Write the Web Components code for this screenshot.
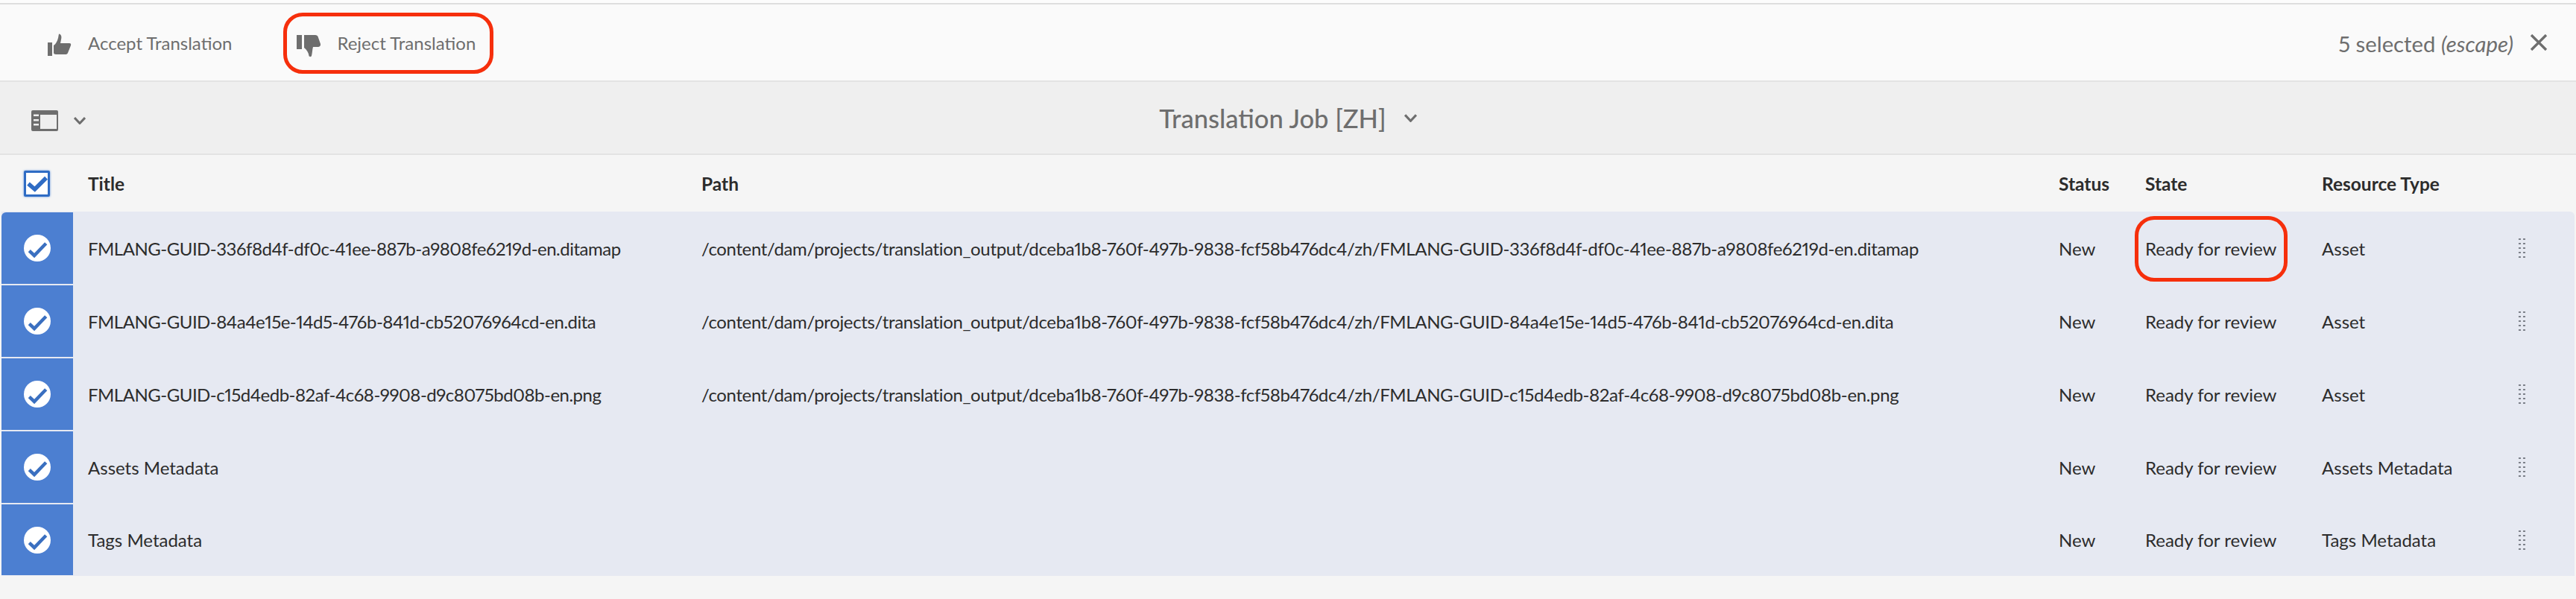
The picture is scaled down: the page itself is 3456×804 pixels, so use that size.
<!DOCTYPE html>
<html>
<head>
<meta charset="utf-8">
<title>Translation Job</title>
<style>
    html, body { margin: 0; padding: 0; background: #f5f5f5; }
    body { font-family: "Lato", "Liberation Sans", sans-serif; font-variant-numeric: proportional-nums; width: 3456px; height: 804px; overflow: hidden; position: relative; }
</style>
</head>
<body>
<action-bar>
    <action-button slot="actions" icon="up">Accept Translation</action-button>
    <action-button slot="actions" icon="down">Reject Translation</action-button>
</action-bar>
<title-bar>Translation Job [ZH]</title-bar>
<job-table>
    <job-header></job-header>
    <job-row title-text="FMLANG-GUID-336f8d4f-df0c-41ee-887b-a9808fe6219d-en.ditamap" path="/content/dam/projects/translation_output/dceba1b8-760f-497b-9838-fcf58b476dc4/zh/FMLANG-GUID-336f8d4f-df0c-41ee-887b-a9808fe6219d-en.ditamap" type="Asset"></job-row>
    <job-row title-text="FMLANG-GUID-84a4e15e-14d5-476b-841d-cb52076964cd-en.dita" path="/content/dam/projects/translation_output/dceba1b8-760f-497b-9838-fcf58b476dc4/zh/FMLANG-GUID-84a4e15e-14d5-476b-841d-cb52076964cd-en.dita" type="Asset"></job-row>
    <job-row title-text="FMLANG-GUID-c15d4edb-82af-4c68-9908-d9c8075bd08b-en.png" path="/content/dam/projects/translation_output/dceba1b8-760f-497b-9838-fcf58b476dc4/zh/FMLANG-GUID-c15d4edb-82af-4c68-9908-d9c8075bd08b-en.png" type="Asset"></job-row>
    <job-row title-text="Assets Metadata" path="" type="Assets Metadata"></job-row>
    <job-row title-text="Tags Metadata" path="" type="Tags Metadata"></job-row>
</job-table>
<red-callout style="left:380px;top:17px;width:282px;height:82px"></red-callout>
<red-callout style="left:2864px;top:290px;width:205px;height:88px"></red-callout>

<script>
const THUMB_UP = 'M8 16C11 14 13 10 14 6L15 .5C18 1 19 4 18 8L17 13H29C31 13 31.5 14 31 16L27 26C26.5 27.5 25 28 24 28H11C9.5 28 8 27 8 26Z M0 12H6V30H0Z';
const THUMB_DOWN = 'M0 0H7V19H0Z M10 0H25C27 0 28 1 28.5 2L32 12C32.5 14 31 16 29 16H22C21 19 21 24 20 28C19.5 29.5 17 29.5 16.5 28C16 24 14 20 10 17Z';

class ActionButton extends HTMLElement {
    constructor() {
        super();
        this.attachShadow({ mode: 'open' });
        const down = this.getAttribute('icon') === 'down';
        this.shadowRoot.innerHTML = `
            <style>
                :host { display: flex; align-items: center; gap: 22px; }
                svg { width: 32px; height: 30px; fill: #6e6e6e; flex: none; margin-top: ${down ? 9 : 6}px; }
                span { font-size: 24px; color: #6e6e6e; }
            </style>
            <svg viewBox="0 0 32 30"><path d="${down ? THUMB_DOWN : THUMB_UP}"/></svg>
            <span><slot></slot></span>
        `;
    }
}
customElements.define('action-button', ActionButton);

class ActionBar extends HTMLElement {
    constructor() {
        super();
        this.attachShadow({ mode: 'open' });
        this.shadowRoot.innerHTML = `
            <style>
                :host { display: flex; align-items: center; justify-content: space-between; box-sizing: border-box; height: 106px; margin-top: 4px; padding: 0 38px 0 64px; background: #fafafa; border-top: 2px solid #dedede; border-bottom: 2px solid #e3e3e3; box-shadow: 0 -4px 0 #fcfcfc; }
                .actions { display: flex; gap: 87px; }
                .count { display: flex; align-items: center; gap: 22px; font-size: 29.3px; color: #6e6e6e; }
                .count span { margin-top: 2px; }
                em { font-style: italic; }
                svg { width: 24px; height: 22px; stroke: #6e6e6e; stroke-width: 3.4; fill: none; }
            </style>
            <div class="actions"><slot name="actions"></slot></div>
            <div class="count">
                <span>5 selected <em>(escape)</em></span>
                <svg viewBox="0 0 24 22"><path d="M2 1L22 21M22 1L2 21"/></svg>
            </div>
        `;
    }
}
customElements.define('action-bar', ActionBar);

class TitleBar extends HTMLElement {
    constructor() {
        super();
        this.attachShadow({ mode: 'open' });
        this.shadowRoot.innerHTML = `
            <style>
                :host { display: grid; grid-template-columns: 1fr auto 1fr; align-items: center; box-sizing: border-box; height: 98px; padding: 0 42px; background: #efefef; border-bottom: 2px solid #e3e3e3; }
                .rail { display: flex; align-items: center; gap: 21px; margin-top: 8px; }
                .layout { width: 36px; height: 28px; }
                .chev { fill: none; stroke: #6e6e6e; stroke-width: 3; }
                .center { display: flex; align-items: center; gap: 24px; font-size: 34.5px; font-weight: 500; color: #6e6e6e; }
            </style>
            <div class="rail">
                <svg class="layout" viewBox="0 0 36 28"><path fill="#6e6e6e" fill-rule="evenodd" d="M2 0H34A2 2 0 0 1 36 2V26A2 2 0 0 1 34 28H2A2 2 0 0 1 0 26V2A2 2 0 0 1 2 0ZM12 6V25H34V6ZM3 5.5V8H10V5.5ZM3 12V14.5H10V12ZM3 18V20.5H10V18Z"/></svg>
                <svg class="chev" width="16" height="10" viewBox="0 0 16 10"><path d="M1 1L8 8.5L15 1"/></svg>
            </div>
            <div class="center">
                <span><slot></slot></span>
                <svg class="chev" width="17" height="11" viewBox="0 0 16 10"><path d="M1 1L8 8.5L15 1"/></svg>
            </div>
            <div></div>
        `;
    }
}
customElements.define('title-bar', TitleBar);

class JobTable extends HTMLElement {
    constructor() {
        super();
        this.attachShadow({ mode: 'open' });
        this.shadowRoot.innerHTML = `
            <style>
                :host { display: block; --job-columns: 116px 823px 1821px 116px 237px 264px 1fr; }
            </style>
            <slot></slot>
        `;
    }
}
customElements.define('job-table', JobTable);

class JobHeader extends HTMLElement {
    constructor() {
        super();
        this.attachShadow({ mode: 'open' });
        this.shadowRoot.innerHTML = `
            <style>
                :host { display: grid; grid-template-columns: var(--job-columns); align-items: center; box-sizing: border-box; height: 76px; padding-left: 2px; font-size: 24.5px; font-weight: 700; color: #2c2c2c; }
                .box { box-sizing: border-box; width: 35px; height: 35px; margin-left: 30px; background: #fff; border: 3px solid #2f6cc4; border-radius: 2px; box-shadow: 0 0 3px #5d92dc; }
                svg { display: block; width: 29px; height: 29px; fill: none; stroke: #2f6cc4; stroke-width: 5.5; }
            </style>
            <div><div class="box"><svg viewBox="0 0 29 29"><path d="M3 14.7L11.7 22L27 6.7"/></svg></div></div>
            <div>Title</div><div>Path</div><div>Status</div><div>State</div><div>Resource Type</div><div></div>
        `;
    }
}
customElements.define('job-header', JobHeader);

class JobRow extends HTMLElement {
    constructor() {
        super();
        this.attachShadow({ mode: 'open' });
        const dots = [];
        for (let y = 0; y < 25; y += 6) {
            dots.push(`<rect x="0" y="${y}" width="3" height="2"/><rect x="6" y="${y}" width="3" height="2"/>`);
        }
        const path = this.getAttribute('path');
        this.shadowRoot.innerHTML = `
            <style>
                :host { display: grid; grid-template-columns: var(--job-columns); align-items: center; box-sizing: border-box; height: 98px; margin: 0 2px; background: #e6e9f2; font-size: 24px; color: #2c2c2c; }
                :host(:first-of-type) { border-top-right-radius: 6px; }
                :host(:last-child) { height: 97px; }
                :host(:first-of-type) .tile { border-top-left-radius: 6px; }
                .select { grid-column: 1; align-self: stretch; display: flex; }
                .tile { width: 96px; margin: 1px 0; background: #4c7fd1; display: flex; align-items: center; justify-content: center; }
                .tile svg { width: 36px; height: 36px; }
                .handle { display: block; width: 9px; height: 26px; fill: #7d818a; }
                .guid { letter-spacing: -0.5px; }
                .path { letter-spacing: -0.36px; }
            </style>
            <div class="select"><div class="tile">
                <svg viewBox="0 0 36 36"><circle cx="18" cy="18" r="18" fill="#fff"/><path d="M7.3 21.7L14 28L29.7 11.7" fill="none" stroke="#3a6fc0" stroke-width="4.5"/></svg>
            </div></div>
            <div class="${path ? 'guid' : ''}">${this.getAttribute('title-text')}</div>
            <div class="path">${path}</div>
            <div>New</div>
            <div>Ready for review</div>
            <div>${this.getAttribute('type')}</div>
            <div><svg class="handle" viewBox="0 0 9 26">${dots.join('')}</svg></div>
        `;
    }
}
customElements.define('job-row', JobRow);

class RedCallout extends HTMLElement {
    constructor() {
        super();
        this.attachShadow({ mode: 'open' });
        this.shadowRoot.innerHTML = `
            <style>
                :host { display: block; position: absolute; box-sizing: border-box; border: 5px solid #f62f0c; border-radius: 26px; pointer-events: none; }
            </style>
        `;
    }
}
customElements.define('red-callout', RedCallout);
</script>
</body>
</html>
